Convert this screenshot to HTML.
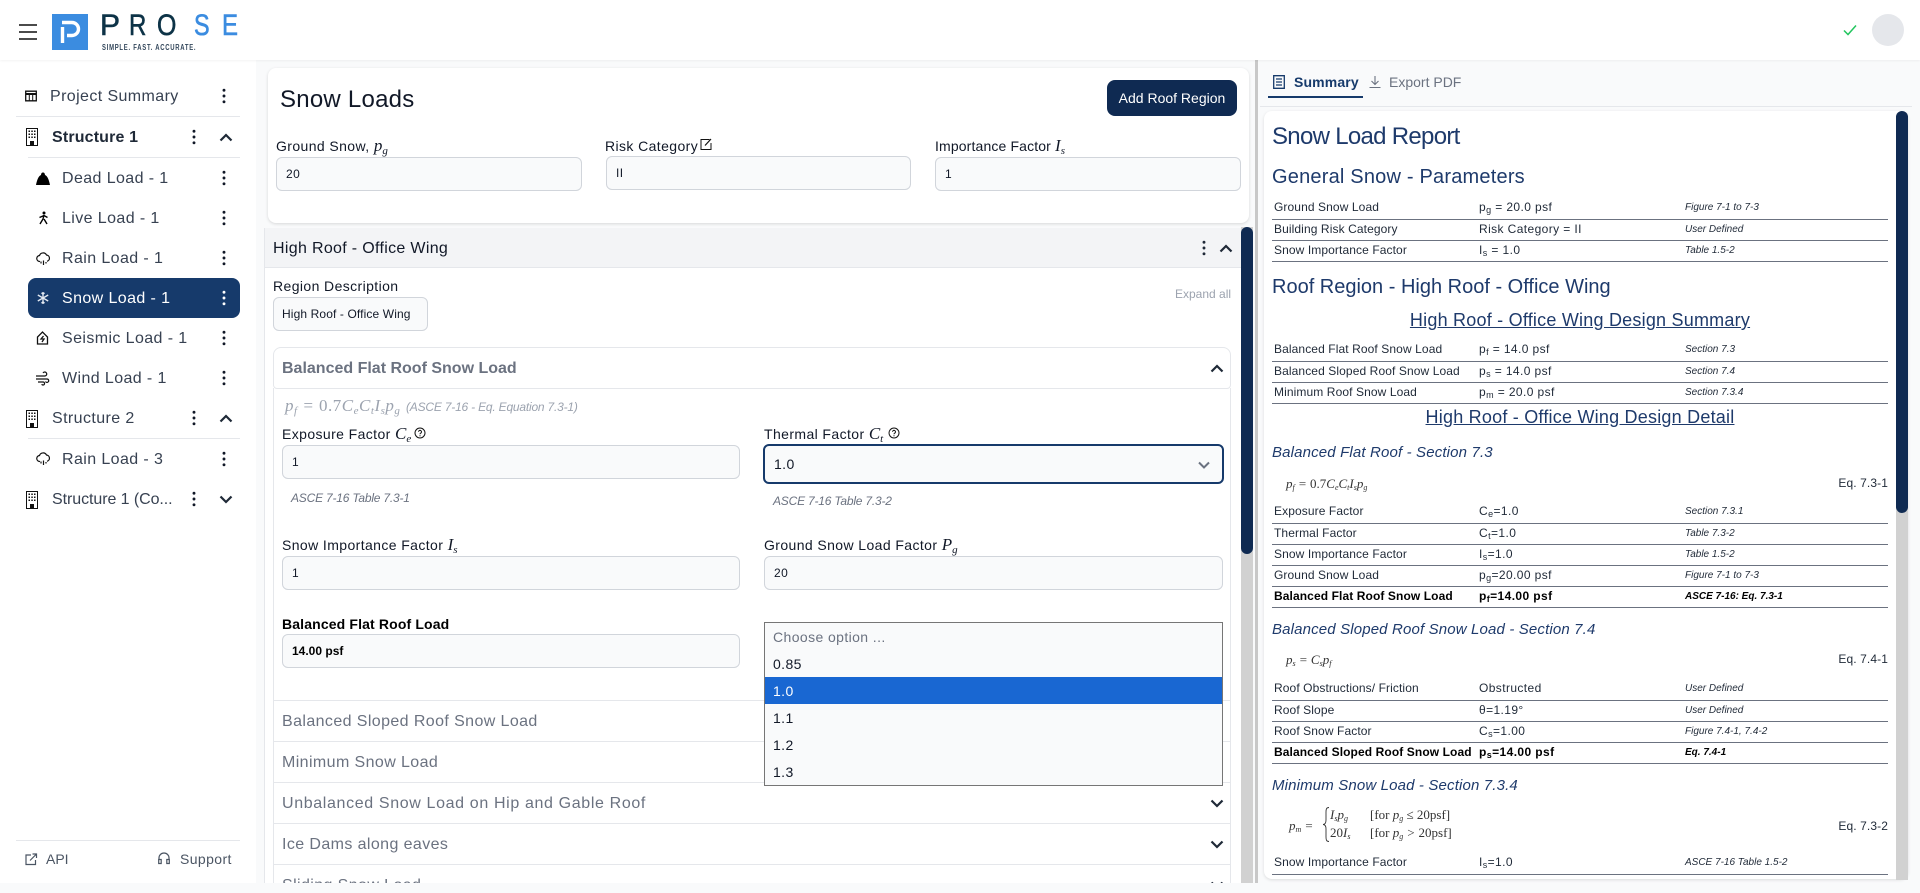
<!DOCTYPE html>
<html lang="en">
<head>
<meta charset="utf-8">
<title>Snow Loads</title>
<style>
html,body{margin:0;padding:0;width:1920px;height:893px;overflow:hidden;background:#f9fafb;font-family:"Liberation Sans",sans-serif;letter-spacing:.025em;color:#111827}
*{box-sizing:border-box}
.a{position:absolute}
.t{position:absolute;line-height:20px;height:20px;white-space:nowrap}
.s{font-size:16px;color:#374151;margin-top:1px}
.lb{font-size:14px;color:#111827}
.m{font-family:"Liberation Serif",serif;font-style:italic;font-size:17px;letter-spacing:0}
.m sub{font-size:11px;line-height:0;vertical-align:-3px}
.in{position:absolute;background:#f9fafb;border:1px solid #d1d5db;border-radius:6px;font-size:12px;line-height:33px;padding-left:8px;white-space:nowrap;color:#111827}
.h{font-size:16px;color:#6b7280;margin-top:1px}
.hr{position:absolute;height:1px;background:#e5e7eb}
.note{font-size:12px;font-style:italic;color:#6b7280;letter-spacing:-.2px}
svg{position:absolute;overflow:visible}
.rt{color:#1e3a6b;position:absolute;white-space:nowrap;line-height:30px;height:30px}
.rep{position:absolute;left:1272px;width:616px;border-collapse:collapse;table-layout:fixed;font-size:12px;color:#1f2937}
.rep td{height:21px;padding:0 0 1px 2px;border-bottom:1px solid #6b7280;white-space:nowrap;line-height:19px;overflow:hidden}
.rep td:nth-child(1){letter-spacing:.1px}
.rep td:nth-child(3){font-size:10px;font-style:italic;letter-spacing:0;padding-left:3px}
.rep sub{font-size:9px;line-height:0;vertical-align:-2px}
.rep tr.b td{font-weight:bold;color:#000}
.eq{position:absolute;font-family:"Liberation Serif",serif;font-style:italic;font-size:13px;color:#333;white-space:nowrap;letter-spacing:0;line-height:20px}
.eq sub{font-size:8px;line-height:0;vertical-align:-2px}
.eqn{position:absolute;right:32px;font-size:12px;letter-spacing:.1px;color:#1f2937;line-height:20px;white-space:nowrap}
.opt{position:absolute;left:1px;width:456px;height:27px;line-height:29px;padding-left:8px;font-size:14px;color:#111827}
.sec{font-size:15px;font-style:italic;letter-spacing:.01em}
</style>
</head>
<body>
<svg width="0" height="0" style="position:absolute">
<defs>
<symbol id="k" viewBox="0 0 4 16"><circle cx="2" cy="2.200" r="1.450"/><circle cx="2" cy="8" r="1.450"/><circle cx="2" cy="13.800" r="1.450"/></symbol>
<symbol id="up" viewBox="0 0 14 9"><path d="M1.500 7.500 7 2l5.500 5.500" fill="none" stroke="currentColor" stroke-width="2.200"/></symbol>
<symbol id="dn" viewBox="0 0 14 9"><path d="M1.500 1.500 7 7l5.500-5.500" fill="none" stroke="currentColor" stroke-width="2.200"/></symbol>
<symbol id="bd" viewBox="0 0 12 18"><path d="M.5.500h11v17H.5z" fill="#fff" stroke="#111" stroke-width="1"/><path d="M2.500 2.500h1.500v1.500H2.500zM5.300 2.500h1.500v1.500H5.300zM8 2.500h1.500v1.500H8zM2.500 5.500h1.500v1.500H2.500zM5.300 5.500h1.500v1.500H5.300zM8 5.500h1.500v1.500H8zM2.500 8.500h1.500v1.500H2.500zM5.300 8.500h1.500v1.500H5.300zM8 8.500h1.500v1.500H8zM4 13h4v5H4z" fill="#111"/></symbol>
<symbol id="rn" viewBox="0 0 14 14"><path d="M4 9.500a3 3 0 0 1-.5-6A3.800 3.800 0 0 1 10.500 3a3.200 3.200 0 0 1 .5 6.300M5 9.500v2M7.500 8.500v4.500M10 10v1.500" fill="none" stroke="#111" stroke-width="1.200"/></symbol>
<symbol id="qm" viewBox="0 0 12 12"><circle cx="6" cy="6" r="5" fill="none" stroke="#111" stroke-width="1"/><path d="M4.500 4.800a1.500 1.500 0 1 1 2.300 1.300c-.6.300-.8.600-.8 1.100" fill="none" stroke="#111" stroke-width="1"/><circle cx="6" cy="8.800" r=".6" fill="#111"/></symbol>
</defs>
</svg>

<!-- main column, clipped -->
<div class="a" style="left:0;top:0;width:1920px;height:883px;overflow:hidden">
  <!-- sidebar -->
  <div class="a" style="left:0;top:0;width:256px;height:893px;background:#fff"></div>

  <!-- region panel -->
  <div class="a" style="left:264px;top:228px;width:978px;height:660px;background:#fff;border-left:1px solid #e5e7eb"></div>
  <div class="a" style="left:265px;top:228px;width:976px;height:40px;background:#f3f4f6;border-bottom:1px solid #e5e7eb"></div>
  <div class="t" style="left:273px;top:239px;font-size:16px;color:#111827;letter-spacing:.02em">High Roof - Office Wing</div>
  <svg style="left:1202px;top:240px" width="4" height="16" fill="#1f2937"><use href="#k"/></svg>
  <svg style="left:1219px;top:244px;color:#1f2937" width="14" height="9"><use href="#up"/></svg>
  <div class="t lb" style="left:273px;top:276px">Region Description</div>
  <div class="in" style="left:273px;top:297px;width:155px;height:34px;line-height:32px;letter-spacing:.01em">High Roof - Office Wing</div>
  <div class="t" style="left:1175px;top:284px;font-size:12px;color:#9ca3af;letter-spacing:0">Expand all</div>

  <!-- accordion -->
  <div class="a" style="left:273px;top:347px;width:958px;height:42px;border:1px solid #e5e7eb;border-radius:8px 8px 4px 4px;background:#fff"></div>
  <div class="t h" style="left:282px;top:358px;font-weight:bold;letter-spacing:0">Balanced Flat Roof Snow Load</div>
  <svg style="left:1210px;top:364px;color:#1f2937" width="14" height="9"><use href="#up"/></svg>
  <div class="a" style="left:273px;top:388px;width:958px;height:500px;border-left:1px solid #e5e7eb;border-right:1px solid #e5e7eb"></div>

  <div class="t m" style="left:285px;top:396px;color:#9ca3af;letter-spacing:.5px">p<sub>f</sub> = <span style="font-style:normal">0.7</span>C<sub>e</sub>C<sub>t</sub>I<sub>s</sub>p<sub>g</sub></div>
  <div class="t note" style="left:406px;top:397px;color:#9ca3af">(ASCE 7-16 - Eq. Equation 7.3-1)</div>

  <div class="t lb" style="left:282px;top:424px">Exposure Factor <span class="m">C<sub>e</sub></span></div>
  <svg style="left:414px;top:427px" width="12" height="12"><use href="#qm"/></svg>
  <div class="in" style="left:282px;top:445px;width:458px;height:34px;padding-left:9px">1</div>
  <div class="t note" style="left:291px;top:488px">ASCE 7-16 Table 7.3-1</div>

  <div class="t lb" style="left:764px;top:424px">Thermal Factor <span class="m">C<sub>t</sub></span></div>
  <svg style="left:888px;top:427px" width="12" height="12"><use href="#qm"/></svg>
  <div class="in" style="left:763px;top:444px;width:461px;height:40px;border:2px solid #163a6b;font-size:14px;line-height:36px;padding-left:9px">1.0</div>
  <svg style="left:1198px;top:461px;width:12px;height:8px"><path d="M1 1.500 6 6.500l5-5" fill="none" stroke="#6b7280" stroke-width="2"/></svg>
  <div class="t note" style="left:773px;top:491px">ASCE 7-16 Table 7.3-2</div>

  <div class="t lb" style="left:282px;top:535px">Snow Importance Factor <span class="m">I<sub>s</sub></span></div>
  <div class="in" style="left:282px;top:556px;width:458px;height:34px;padding-left:9px">1</div>
  <div class="t lb" style="left:764px;top:535px">Ground Snow Load Factor <span class="m">P<sub>g</sub></span></div>
  <div class="in" style="left:764px;top:556px;width:459px;height:34px;padding-left:9px">20</div>

  <div class="t lb" style="left:282px;top:614px;font-weight:bold;color:#000;letter-spacing:.01em">Balanced Flat Roof Load</div>
  <div class="in" style="left:282px;top:634px;width:458px;height:34px;padding-left:9px;font-weight:bold;color:#000;letter-spacing:0">14.00 psf</div>

  <div class="hr" style="left:274px;top:700px;width:956px"></div>
  <div class="t h" style="left:282px;top:711px">Balanced Sloped Roof Snow Load</div>
  <div class="hr" style="left:274px;top:741px;width:956px"></div>
  <div class="t h" style="left:282px;top:752px">Minimum Snow Load</div>
  <div class="hr" style="left:274px;top:782px;width:956px"></div>
  <div class="t h" style="left:282px;top:793px;letter-spacing:.04em">Unbalanced Snow Load on Hip and Gable Roof</div>
  <svg style="left:1210px;top:799px;color:#1f2937" width="14" height="9"><use href="#dn"/></svg>
  <div class="hr" style="left:274px;top:823px;width:956px"></div>
  <div class="t h" style="left:282px;top:834px">Ice Dams along eaves</div>
  <svg style="left:1210px;top:840px;color:#1f2937" width="14" height="9"><use href="#dn"/></svg>
  <div class="hr" style="left:274px;top:864px;width:956px"></div>
  <div class="t h" style="left:282px;top:875px">Sliding Snow Load</div>
  <svg style="left:1210px;top:881px;color:#1f2937" width="14" height="9"><use href="#dn"/></svg>

  <!-- dropdown -->
  <div class="a" style="left:764px;top:622px;width:459px;height:164px;background:#f9fafb;border:1px solid #767676">
    <div class="opt" style="left:0;top:0;color:#6b7280;width:457px">Choose option ...</div>
    <div class="opt" style="left:0;top:27px;width:457px">0.85</div>
    <div class="opt" style="left:0;top:54px;background:#1967d2;color:#fff;width:457px">1.0</div>
    <div class="opt" style="left:0;top:81px;width:457px">1.1</div>
    <div class="opt" style="left:0;top:108px;width:457px">1.2</div>
    <div class="opt" style="left:0;top:135px;width:457px">1.3</div>
  </div>

  <!-- main scrollbar -->
  <div class="a" style="left:1241px;top:227px;width:12px;height:660px;background:#d1d1d1"></div>
  <div class="a" style="left:1241px;top:227px;width:12px;height:327px;background:#0f2a52;border-radius:6px"></div>

  <!-- top card -->
  <div class="a" style="left:268px;top:68px;width:981px;height:155px;background:#fff;border-radius:8px;box-shadow:0 1px 3px rgba(0,0,0,.14)"></div>
  <div class="t" style="left:280px;top:85px;font-size:24px;line-height:30px;height:30px;color:#111827;letter-spacing:.01em">Snow Loads</div>
  <div class="a" style="left:1107px;top:80px;width:130px;height:36px;background:#0f2a52;border-radius:8px;color:#fff;font-size:14px;line-height:36px;text-align:center;letter-spacing:0">Add Roof Region</div>
  <div class="t lb" style="left:276px;top:136px">Ground Snow, <span class="m">p<sub>g</sub></span></div>
  <div class="in" style="left:276px;top:157px;width:306px;height:34px;padding-left:9px">20</div>
  <div class="t lb" style="left:605px;top:136px">Risk Category</div>
  <svg style="left:700px;top:138px" width="12" height="12"><path d="M9.500 1.500H1v10h10V5" fill="none" stroke="#111" stroke-width="1"/><path d="M5 7.500 11 1" fill="none" stroke="#111" stroke-width="1.200"/></svg>
  <div class="in" style="left:606px;top:156px;width:305px;height:34px;padding-left:9px">II</div>
  <div class="t lb" style="left:935px;top:136px;letter-spacing:.01em">Importance Factor <span class="m">I<sub>s</sub></span></div>
  <div class="in" style="left:935px;top:157px;width:306px;height:34px;padding-left:9px">1</div>

  <!-- divider -->
  <div class="a" style="left:1255px;top:60px;width:3px;height:830px;background:#c8c8c8"></div>

  <!-- right panel -->
  <svg style="left:1273px;top:75px" width="12" height="14"><path d="M.7.700h10.600v12.600H.7z" fill="none" stroke="#163a6b" stroke-width="1.300"/><path d="M3 4h6M3 7h6M3 10h6" stroke="#163a6b" stroke-width="1.300"/></svg>
  <div class="t" style="left:1294px;top:72px;font-size:14px;font-weight:bold;color:#163a6b;letter-spacing:.01em">Summary</div>
  <div class="a" style="left:1268px;top:96px;width:95px;height:2px;background:#163a6b"></div>
  <svg style="left:1369px;top:75px" width="12" height="14"><path d="M6 1v8.500M2.500 6 6 9.500 9.500 6M.5 12.500h11" fill="none" stroke="#6b7280" stroke-width="1.100"/></svg>
  <div class="t" style="left:1389px;top:72px;font-size:14px;color:#6b7280;letter-spacing:0">Export PDF</div>
  <div class="hr" style="left:1260px;top:106px;width:652px"></div>

  <div class="a" style="left:1264px;top:111px;width:644px;height:768px;background:#fff;border-radius:8px;box-shadow:0 1px 3px rgba(0,0,0,.12)"></div>
  <div class="a" style="left:1896px;top:111px;width:12px;height:769px;background:#d1d1d1;border-radius:6px 6px 0 0"></div>
  <div class="a" style="left:1896px;top:111px;width:12px;height:402px;background:#0f2a52;border-radius:6px"></div>

  <div class="rt" style="left:1272px;top:122px;font-size:24px;letter-spacing:-.7px">Snow Load Report</div>
  <div class="rt" style="left:1272px;top:162px;font-size:20px;letter-spacing:.01em">General Snow - Parameters</div>

  <table class="rep" style="top:198px">
    <colgroup><col style="width:205px"><col style="width:205px"><col></colgroup>
    <tr><td>Ground Snow Load</td><td>p<sub>g</sub> = 20.0 psf</td><td>Figure 7-1 to 7-3</td></tr>
    <tr><td>Building Risk Category</td><td>Risk Category = II</td><td>User Defined</td></tr>
    <tr><td>Snow Importance Factor</td><td>I<sub>s</sub> = 1.0</td><td>Table 1.5-2</td></tr>
  </table>

  <div class="rt" style="left:1272px;top:272px;font-size:20px;letter-spacing:0">Roof Region - High Roof - Office Wing</div>
  <div class="rt" style="left:1272px;top:305px;width:616px;text-align:center;font-size:18px;text-decoration:underline;letter-spacing:.22px">High Roof - Office Wing Design Summary</div>

  <table class="rep" style="top:340px">
    <colgroup><col style="width:205px"><col style="width:205px"><col></colgroup>
    <tr><td>Balanced Flat Roof Snow Load</td><td>p<sub>f</sub> = 14.0 psf</td><td>Section 7.3</td></tr>
    <tr><td>Balanced Sloped Roof Snow Load</td><td>p<sub>s</sub> = 14.0 psf</td><td>Section 7.4</td></tr>
    <tr><td>Minimum Roof Snow Load</td><td>p<sub>m</sub> = 20.0 psf</td><td>Section 7.3.4</td></tr>
  </table>

  <div class="rt" style="left:1272px;top:402px;width:616px;text-align:center;font-size:18px;text-decoration:underline;letter-spacing:.22px">High Roof - Office Wing Design Detail</div>

  <div class="rt sec" style="left:1272px;top:438px">Balanced Flat Roof - Section 7.3</div>
  <div class="eq" style="left:1286px;top:474px">p<sub>f</sub> = <span style="font-style:normal">0.7</span>C<sub>e</sub>C<sub>t</sub>I<sub>s</sub>p<sub>g</sub></div>
  <div class="eqn" style="top:473px">Eq. 7.3-1</div>

  <table class="rep" style="top:502px">
    <colgroup><col style="width:205px"><col style="width:205px"><col></colgroup>
    <tr><td>Exposure Factor</td><td>C<sub>e</sub>=1.0</td><td>Section 7.3.1</td></tr>
    <tr><td>Thermal Factor</td><td>C<sub>t</sub>=1.0</td><td>Table 7.3-2</td></tr>
    <tr><td>Snow Importance Factor</td><td>I<sub>s</sub>=1.0</td><td>Table 1.5-2</td></tr>
    <tr><td>Ground Snow Load</td><td>p<sub>g</sub>=20.00 psf</td><td>Figure 7-1 to 7-3</td></tr>
    <tr class="b"><td>Balanced Flat Roof Snow Load</td><td>p<sub>f</sub>=14.00 psf</td><td>ASCE 7-16: Eq. 7.3-1</td></tr>
  </table>

  <div class="rt sec" style="left:1272px;top:615px">Balanced Sloped Roof Snow Load - Section 7.4</div>
  <div class="eq" style="left:1286px;top:650px">p<sub>s</sub> = C<sub>s</sub>p<sub>f</sub></div>
  <div class="eqn" style="top:649px">Eq. 7.4-1</div>

  <table class="rep" style="top:679px">
    <colgroup><col style="width:205px"><col style="width:205px"><col></colgroup>
    <tr><td>Roof Obstructions/ Friction</td><td>Obstructed</td><td>User Defined</td></tr>
    <tr><td>Roof Slope</td><td>θ=1.19°</td><td>User Defined</td></tr>
    <tr><td>Roof Snow Factor</td><td>C<sub>s</sub>=1.00</td><td>Figure 7.4-1, 7.4-2</td></tr>
    <tr class="b"><td>Balanced Sloped Roof Snow Load</td><td>p<sub>s</sub>=14.00 psf</td><td>Eq. 7.4-1</td></tr>
  </table>

  <div class="rt sec" style="left:1272px;top:771px">Minimum Snow Load - Section 7.3.4</div>
  <div class="eq" style="left:1289px;top:816px">p<sub>m</sub> =</div>
  <svg style="left:1322px;top:807px" width="8" height="35"><path d="M7 .5C4.500 .5 4 2 4 5v8c0 3-1 4.500-3 4.500 2 0 3 1.500 3 4.500v8c0 3 .5 4.500 3 4.500" fill="none" stroke="#333" stroke-width=".9"/></svg>
  <div class="eq" style="left:1330px;top:805px">I<sub>s</sub>p<sub>g</sub></div>
  <div class="eq" style="left:1370px;top:805px"><span style="font-style:normal">[for</span> p<sub>g</sub> ≤ <span style="font-style:normal">20psf]</span></div>
  <div class="eq" style="left:1330px;top:823px"><span style="font-style:normal">20</span>I<sub>s</sub></div>
  <div class="eq" style="left:1370px;top:823px"><span style="font-style:normal">[for</span> p<sub>g</sub> &gt; <span style="font-style:normal">20psf]</span></div>
  <div class="eqn" style="top:816px">Eq. 7.3-2</div>

  <table class="rep" style="top:853px">
    <colgroup><col style="width:205px"><col style="width:205px"><col></colgroup>
    <tr><td>Snow Importance Factor</td><td>I<sub>s</sub>=1.0</td><td>ASCE 7-16 Table 1.5-2</td></tr>
  </table>
</div>

<!-- sidebar items -->
<svg style="left:25px;top:90px" width="12" height="12"><path d="M.7 1.200h10.600v9.600H.7z" fill="none" stroke="#111" stroke-width="1.300"/><path d="M.7 4h10.600" stroke="#111" stroke-width="2"/><path d="M4.300 4.500v6M7.700 4.500v6" stroke="#111"/></svg>
<div class="t s" style="left:50px;top:86px">Project Summary</div>
<svg style="left:222px;top:88px;fill:#111827" width="4" height="16"><use href="#k"/></svg>
<div class="hr" style="left:16px;top:116px;width:224px"></div>

<svg style="left:26px;top:128px" width="12" height="18"><use href="#bd"/></svg>
<div class="t s" style="left:52px;top:127px;font-weight:bold;color:#1f2937;letter-spacing:.01em">Structure 1</div>
<svg style="left:192px;top:129px;fill:#111827" width="4" height="16"><use href="#k"/></svg>
<svg style="left:219px;top:133px;color:#1f2937" width="14" height="9"><use href="#up"/></svg>
<div class="hr" style="left:28px;top:157px;width:212px"></div>

<svg style="left:36px;top:172px" width="14" height="13"><path d="M5 3C5.200 1 6 .5 7 .5s1.800.5 2 2.500c2.500 1 4 5 5 10H0c1-5 2.500-9 5-10z" fill="#000"/></svg>
<div class="t s" style="left:62px;top:168px">Dead Load - 1</div>
<svg style="left:222px;top:170px;fill:#111827" width="4" height="16"><use href="#k"/></svg>

<svg style="left:37px;top:211px" width="13" height="14"><circle cx="7" cy="2" r="1.500"/><path d="M7 4 6 8 3 13M7 8l3 5M2.500 6.500 7 4.500l3.500 2" fill="none" stroke="#000" stroke-width="1.400"/></svg>
<div class="t s" style="left:62px;top:208px">Live Load - 1</div>
<svg style="left:222px;top:210px;fill:#111827" width="4" height="16"><use href="#k"/></svg>

<svg style="left:36px;top:252px" width="14" height="14"><use href="#rn"/></svg>
<div class="t s" style="left:62px;top:248px">Rain Load - 1</div>
<svg style="left:222px;top:250px;fill:#111827" width="4" height="16"><use href="#k"/></svg>

<div class="a" style="left:28px;top:278px;width:212px;height:40px;background:#163a6b;border-radius:8px"></div>
<svg style="left:36px;top:291px" width="14" height="14"><path d="M7 1v12M1.800 4l10.400 6M1.800 10l10.400-6M5.500 1.800 7 3.300l1.500-1.500M5.500 12.200 7 10.700l1.500 1.500" fill="none" stroke="#e5eaf2" stroke-width="1.300"/></svg>
<div class="t s" style="left:62px;top:288px;color:#fff">Snow Load - 1</div>
<svg style="left:222px;top:290px;fill:#fff" width="4" height="16"><use href="#k"/></svg>

<svg style="left:36px;top:331px" width="13" height="14"><path d="M1.500 13V6L6.500 1l5 5v7zM7.500 5 5 8h3l-2 3" fill="none" stroke="#111" stroke-width="1.300"/></svg>
<div class="t s" style="left:62px;top:328px">Seismic Load - 1</div>
<svg style="left:222px;top:330px;fill:#111827" width="4" height="16"><use href="#k"/></svg>

<svg style="left:36px;top:371px" width="13" height="14"><path d="M0 5h9a2 2 0 1 0-2-3M0 8h11a1.700 1.700 0 1 1-1.500 2.500M2 11h5a1.500 1.500 0 1 1-1.300 2.200" fill="none" stroke="#111" stroke-width="1.200"/></svg>
<div class="t s" style="left:62px;top:368px">Wind Load - 1</div>
<svg style="left:222px;top:370px;fill:#111827" width="4" height="16"><use href="#k"/></svg>

<svg style="left:26px;top:410px" width="12" height="18"><use href="#bd"/></svg>
<div class="t s" style="left:52px;top:408px">Structure 2</div>
<svg style="left:192px;top:410px;fill:#111827" width="4" height="16"><use href="#k"/></svg>
<svg style="left:219px;top:414px;color:#1f2937" width="14" height="9"><use href="#up"/></svg>
<div class="hr" style="left:28px;top:438px;width:212px"></div>

<svg style="left:36px;top:452px" width="14" height="14"><use href="#rn"/></svg>
<div class="t s" style="left:62px;top:449px">Rain Load - 3</div>
<svg style="left:222px;top:451px;fill:#111827" width="4" height="16"><use href="#k"/></svg>

<svg style="left:26px;top:491px" width="12" height="18"><use href="#bd"/></svg>
<div class="t s" style="left:52px;top:489px;letter-spacing:-.07px">Structure 1 (Co...</div>
<svg style="left:192px;top:491px;fill:#111827" width="4" height="16"><use href="#k"/></svg>
<svg style="left:219px;top:495px;color:#1f2937" width="14" height="9"><use href="#dn"/></svg>

<div class="hr" style="left:16px;top:840px;width:224px"></div>
<svg style="left:25px;top:853px" width="12" height="12"><path d="M6 2H1v9.500h9.500V7M5 7.500 11 1.500M7.500 1H11.500v4" fill="none" stroke="#4b5563" stroke-width="1.200"/></svg>
<div class="t" style="left:46px;top:849px;font-size:14px;color:#4b5563;letter-spacing:0">API</div>
<svg style="left:158px;top:852px" width="12" height="14"><path d="M1 8V6a5 5 0 0 1 10 0v2" fill="none" stroke="#4b5563" stroke-width="1.200"/><path d="M.7 7.500h2.500v4H.7zM8.800 7.500h2.500v4H8.800z" fill="none" stroke="#4b5563" stroke-width="1.200"/></svg>
<div class="t" style="left:180px;top:849px;font-size:14px;color:#4b5563">Support</div>

<!-- header -->
<div class="a" style="left:0;top:0;width:1920px;height:60px;background:#fff;box-shadow:0 1px 2px rgba(0,0,0,.05)"></div>
<div class="a" style="left:19px;top:24px;width:18px;height:2px;background:#4b4b4b"></div>
<div class="a" style="left:19px;top:31px;width:18px;height:2px;background:#4b4b4b"></div>
<div class="a" style="left:19px;top:38px;width:18px;height:2px;background:#4b4b4b"></div>
<div class="a" style="left:52px;top:14px;width:36px;height:36px;background:#3b8ce0"></div>
<svg style="left:52px;top:14px" width="36" height="36"><path d="M10 8.500h10a6 6 0 0 1 0 13h-5M10.500 13v16" fill="none" stroke="#fff" stroke-width="3.400"/></svg>
<div class="a" style="left:0;top:0;height:60px;width:260px;font-size:30px;line-height:30px;color:#0d3347;letter-spacing:0;-webkit-text-stroke:.6px currentColor">
  <span class="a" style="left:100px;top:11px">P</span>
  <span class="a" style="left:129px;top:11px;transform:scaleX(.8);transform-origin:left top">R</span>
  <span class="a" style="left:157px;top:11px;transform:scaleX(.83);transform-origin:left top">O</span>
  <span class="a" style="left:194px;top:11px;color:#3b8ce0;transform:scaleX(.78);transform-origin:left top">S</span>
  <span class="a" style="left:222px;top:11px;color:#3b8ce0;transform:scaleX(.8);transform-origin:left top">E</span>
</div>
<div class="t" style="left:102px;top:38px;font-size:8px;font-weight:bold;color:#33475b;letter-spacing:1px;transform:scaleX(.74);transform-origin:left top">SIMPLE. FAST. ACCURATE.</div>
<svg style="left:1843px;top:24px" width="14" height="12"><path d="M1 6.500 5 10.500 13 1.500" fill="none" stroke="#22c55e" stroke-width="1.500"/></svg>
<div class="a" style="left:1872px;top:14px;width:32px;height:32px;border-radius:50%;background:#e5e7eb"></div>
</body>
</html>
